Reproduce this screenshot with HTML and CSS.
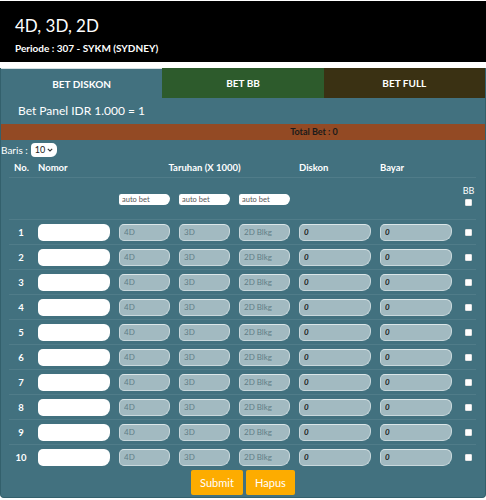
FILE: index.html
```html
<!doctype html>
<html lang="id">
  <head>
    <meta charset="UTF-8" />
    <meta name="viewport" content="width=device-width, initial-scale=1.0" />
    <title>4D, 3D, 2D - Bet Diskon</title>
    <link rel="stylesheet" href="styles.css">
  </head>
  <body>
    <header class="top">
      <h1>4D, 3D, 2D</h1>
      <p>Periode : 307 - SYKM (SYDNEY)</p>
    </header>

    <div class="panel">
      <nav class="tabs">
        <a class="tab tab-diskon">BET DISKON</a>
        <a class="tab tab-bb">BET BB</a>
        <a class="tab tab-full">BET FULL</a>
      </nav>

      <div class="panel-title">Bet Panel IDR 1.000 = 1</div>
      <div class="total-bar">Total Bet : 0</div>

      <div class="baris">
        <label>Baris :</label>
        <span class="select-wrap">
          <select class="baris-select">
            <option>10</option>
          </select>
          <svg class="chevron" width="6" height="4" viewBox="0 0 6 4"><path d="M0.8 0.8 L3 3 L5.2 0.8" fill="none" stroke="#333" stroke-width="1.1"/></svg>
        </span>
      </div>

      <div class="bet-grid head">
        <div class="c-no">No.</div>
        <div>Nomor</div>
        <div class="c-taruhan">Taruhan (X 1000)</div>
        <div>Diskon</div>
        <div>Bayar</div>
        <div></div>
      </div>

      <div class="bet-grid auto-row">
        <div></div>
        <div></div>
        <input class="auto" placeholder="auto bet">
        <input class="auto" placeholder="auto bet">
        <input class="auto" placeholder="auto bet">
        <div></div>
        <div></div>
        <div class="bb-cell"><span>BB</span><input type="checkbox" class="chk"></div>
      </div>

      <div class="bet-grid row">
        <div class="c-no">1</div>
        <input class="nomor">
        <input class="bet" placeholder="4D"><input class="bet" placeholder="3D"><input class="bet" placeholder="2D Blkg">
        <input class="bet val" value="0"><input class="bet val" value="0">
        <input type="checkbox" class="chk">
      </div>
      <div class="bet-grid row">
        <div class="c-no">2</div>
        <input class="nomor">
        <input class="bet" placeholder="4D"><input class="bet" placeholder="3D"><input class="bet" placeholder="2D Blkg">
        <input class="bet val" value="0"><input class="bet val" value="0">
        <input type="checkbox" class="chk">
      </div>
      <div class="bet-grid row">
        <div class="c-no">3</div>
        <input class="nomor">
        <input class="bet" placeholder="4D"><input class="bet" placeholder="3D"><input class="bet" placeholder="2D Blkg">
        <input class="bet val" value="0"><input class="bet val" value="0">
        <input type="checkbox" class="chk">
      </div>
      <div class="bet-grid row">
        <div class="c-no">4</div>
        <input class="nomor">
        <input class="bet" placeholder="4D"><input class="bet" placeholder="3D"><input class="bet" placeholder="2D Blkg">
        <input class="bet val" value="0"><input class="bet val" value="0">
        <input type="checkbox" class="chk">
      </div>
      <div class="bet-grid row">
        <div class="c-no">5</div>
        <input class="nomor">
        <input class="bet" placeholder="4D"><input class="bet" placeholder="3D"><input class="bet" placeholder="2D Blkg">
        <input class="bet val" value="0"><input class="bet val" value="0">
        <input type="checkbox" class="chk">
      </div>
      <div class="bet-grid row">
        <div class="c-no">6</div>
        <input class="nomor">
        <input class="bet" placeholder="4D"><input class="bet" placeholder="3D"><input class="bet" placeholder="2D Blkg">
        <input class="bet val" value="0"><input class="bet val" value="0">
        <input type="checkbox" class="chk">
      </div>
      <div class="bet-grid row">
        <div class="c-no">7</div>
        <input class="nomor">
        <input class="bet" placeholder="4D"><input class="bet" placeholder="3D"><input class="bet" placeholder="2D Blkg">
        <input class="bet val" value="0"><input class="bet val" value="0">
        <input type="checkbox" class="chk">
      </div>
      <div class="bet-grid row">
        <div class="c-no">8</div>
        <input class="nomor">
        <input class="bet" placeholder="4D"><input class="bet" placeholder="3D"><input class="bet" placeholder="2D Blkg">
        <input class="bet val" value="0"><input class="bet val" value="0">
        <input type="checkbox" class="chk">
      </div>
      <div class="bet-grid row">
        <div class="c-no">9</div>
        <input class="nomor">
        <input class="bet" placeholder="4D"><input class="bet" placeholder="3D"><input class="bet" placeholder="2D Blkg">
        <input class="bet val" value="0"><input class="bet val" value="0">
        <input type="checkbox" class="chk">
      </div>
      <div class="bet-grid row">
        <div class="c-no">10</div>
        <input class="nomor">
        <input class="bet" placeholder="4D"><input class="bet" placeholder="3D"><input class="bet" placeholder="2D Blkg">
        <input class="bet val" value="0"><input class="bet val" value="0">
        <input type="checkbox" class="chk">
      </div>

      <div class="actions">
        <button class="btn btn-submit">Submit</button>
        <button class="btn btn-hapus">Hapus</button>
      </div>
    </div>
  </body>
</html>
```

FILE: styles.css
```css
* {
  margin: 0;
  padding: 0;
  box-sizing: border-box;
}

body {
  font-family: Lato, "Noto Sans", sans-serif;
  background: #fff;
  padding-top: 1px;
  color: #fff;
}

.top {
  background: #000;
  height: 61px;
  padding: 14px 15px 0;
}

.top h1 {
  font-size: 17px;
  font-weight: 400;
  line-height: 22px;
}

.top p {
  font-size: 10px;
  font-weight: 700;
  margin-top: 5px;
}

.panel {
  margin-top: 6px;
  background: #42717f;
  border: 1px solid #33606c;
  border-top: 0;
  border-radius: 0 0 4px 4px;
  padding-bottom: 2px;
}

.tabs {
  display: grid;
  grid-template-columns: repeat(3, 1fr);
  height: 30px;
}

.tab {
  display: flex;
  align-items: center;
  justify-content: center;
  font-size: 10px;
  font-weight: 700;
  color: #fff;
}

.tab-diskon {
  background: #42717f;
  border-top: 1px solid #d4e0e3;
}

.tab-bb {
  background: #2d5b2c;
}

.tab-full {
  background: #3a3113;
}

.panel-title {
  height: 26px;
  line-height: 26px;
  padding-left: 17px;
  font-size: 12px;
}

.total-bar {
  background: #934a24;
  height: 16px;
  line-height: 16px;
  font-size: 9px;
  font-weight: 700;
  color: #1b1b1b;
  text-align: center;
  padding-left: 142px;
}

.baris {
  display: flex;
  align-items: center;
  height: 17px;
  padding-top: 2px;
  font-size: 10px;
  gap: 3px;
}

.select-wrap {
  position: relative;
  display: inline-block;
}

.baris-select {
  appearance: none;
  -webkit-appearance: none;
  width: 26px;
  height: 14px;
  border: 0;
  border-radius: 4px 5px 6px 4px;
  background: #fff;
  font-family: inherit;
  font-size: 9px;
  color: #222;
  padding-left: 4px;
  display: block;
}

.chevron {
  position: absolute;
  right: 4px;
  top: 5px;
}

/* shared column grid for header, auto bet and number rows */
.bet-grid {
  display: grid;
  grid-template-columns: 20px 72px 51px 51px 51px 72px 72px 1fr;
  column-gap: 9px;
  align-items: center;
  margin: 0 9px 0 8px;
}

.c-no {
  text-align: center;
  padding-left: 4px;
}

.head {
  height: 21px;
  padding-top: 1px;
  font-size: 9.5px;
  font-weight: 700;
  border-bottom: 1px solid rgba(255, 255, 255, 0.08);
}

.head .c-no {
  padding-left: 5px;
}

.c-taruhan {
  grid-column: span 3;
  text-align: center;
}

.auto-row {
  height: 41px;
  padding-top: 1px;
}

.auto {
  height: 11px;
  border: 0;
  border-radius: 3px 6px 8px 3px;
  background: #fff;
  font-family: inherit;
  font-size: 7.5px;
  padding-left: 3px;
  color: #333;
}

.auto::placeholder {
  color: #555;
}

.bb-cell {
  display: flex;
  flex-direction: column;
  align-items: center;
  gap: 3px;
  font-size: 9px;
  margin-top: -8px;
}

.row {
  height: 25px;
  border-top: 1px solid rgba(255, 255, 255, 0.08);
  font-size: 9.5px;
  font-weight: 700;
}

.nomor {
  height: 17px;
  border: 0;
  border-radius: 5px 6px 8px 5px;
  background: #fff;
}

.bet {
  height: 17px;
  border: 1px solid #c9d8dc;
  border-top-color: #dbe6e8;
  border-radius: 5px 6px 9px 5px;
  background: #a2bac1;
  font-family: inherit;
  font-size: 8px;
  padding-left: 4px;
  color: #1b1b1b;
}

.bet::placeholder {
  color: #617e87;
}

.val {
  font-weight: 700;
  font-style: italic;
  font-size: 8px;
}

.chk {
  appearance: none;
  -webkit-appearance: none;
  width: 7px;
  height: 7px;
  background: #fff;
  border: 1px solid #e4e4e4;
  border-radius: 1px;
  justify-self: center;
}

.actions {
  display: flex;
  justify-content: center;
  gap: 3px;
  padding-top: 1px;
}

.btn {
  height: 25px;
  border: 0;
  border-radius: 2px;
  background: #fdac00;
  color: #fff;
  font-family: inherit;
  font-size: 11px;
}

.btn-submit {
  width: 52px;
}

.btn-hapus {
  width: 49px;
}
```
